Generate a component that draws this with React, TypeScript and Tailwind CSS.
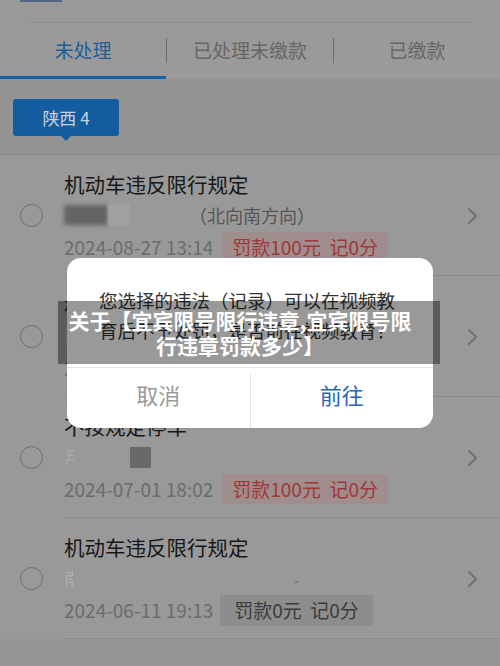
import React from "react";

const font = { fontFamily: '"Noto Sans CJK SC", "Noto Sans", sans-serif' };

function Radio() {
  return (
    <div className="w-[64px] flex items-center justify-center shrink-0">
      <div className="w-[23px] h-[23px] rounded-full border-[1.5px] border-[#6e6e6e] mr-[2px]" />
    </div>
  );
}

function Chevron() {
  return (
    <svg width="12" height="18" viewBox="0 0 12 18" className="absolute right-[21px] top-1/2 -translate-y-1/2">
      <path d="M2 2 L9 9 L2 16" fill="none" stroke="#6f6f6f" strokeWidth="2" strokeLinecap="round" strokeLinejoin="round" />
    </svg>
  );
}

function Item({
  title,
  line2,
  date,
  badge,
  red,
}: {
  title: string;
  line2: React.ReactNode;
  date: string;
  badge: string;
  red: boolean;
}) {
  return (
    <div className="flex items-stretch h-[121px] relative">
      <Radio />
      <div className="flex-1 border-b border-[#8c8c8c] pt-[16px]">
        <div className="h-[26px] leading-[26px] text-[20.5px] text-[#171717]">{title}</div>
        <div className="h-[30px] mt-[3px] flex items-center">{line2}</div>
        <div className="h-[30px] mt-[2px] flex items-center">
          <span className="text-[19px] text-[#6c6c6c]">{date}</span>
          <span
            className={
              red
                ? "ml-[9px] h-[30px] px-[10px] flex items-center text-[19px] bg-[#a08d8d] text-[#a03838] whitespace-pre"
                : "ml-[7px] h-[31px] px-[14px] flex items-center text-[19px] bg-[#8d8d8d] text-[#3b3b3b] whitespace-pre"
            }
          >
            {badge}
          </span>
        </div>
      </div>
      <Chevron />
    </div>
  );
}

export default function App() {
  return (
    <div className="relative w-[500px] h-[666px] overflow-hidden bg-[#969696]" style={font}>
      {/* top strip */}
      <div className="h-[23px] bg-[#999999] relative">
        <div className="ml-[20px] w-[42px] h-[2px] bg-[#4f6785]" />
        <div className="absolute left-[27px] right-[27px] bottom-0 h-px bg-[#8f8f8f]" />
      </div>
      {/* tabs */}
      <div className="h-[56px] bg-[#9a9a9a] flex relative">
        <div className="w-[166px] flex items-center justify-center text-[19px] text-[#1c5e9c] border-b-[3px] border-[#155fa5] pt-[1px]">
          未处理
        </div>
        <div className="w-px h-[25px] bg-[#6b6b6b] mt-[15px]" />
        <div className="w-[166px] flex items-center justify-center text-[19px] text-[#666] pb-[2px]">
          已处理未缴款
        </div>
        <div className="w-px h-[25px] bg-[#6b6b6b] mt-[15px]" />
        <div className="flex-1 flex items-center justify-center text-[19px] text-[#666] pb-[2px]">
          已缴款
        </div>
      </div>
      {/* header */}
      <div className="h-[76px] bg-[#939393] pt-[20px] pl-[13px] border-b border-[#8e8e8e]">
        <div className="relative w-[106px] h-[37px] rounded-[3px] bg-[#135c9f] flex items-center justify-center text-[17px] text-[#c9d3de]">
          陕西 4
          <div className="absolute left-[47px] -bottom-[5px] w-0 h-0 border-l-[6px] border-r-[6px] border-t-[6px] border-l-transparent border-r-transparent border-t-[#135c9f]" />
        </div>
      </div>
      {/* list */}
      <div className="bg-[#999999]">
        <Item
          title="机动车违反限行规定"
          red
          date="2024-08-27 13:14"
          badge="罚款100元  记0分"
          line2={
            <div className="flex items-center w-full">
              <div className="w-[44px] h-[20px] bg-[#646464] blur-[2px]" />
              <div className="w-[22px] h-[22px] bg-[#a1a1a1] blur-[1px]" />
              <span className="ml-[59px] text-[18px] text-[#555]">（北向南方向）</span>
            </div>
          }
        />
        <Item
          title="机动车违反限行规定"
          red
          date="2024-07-15 08:40"
          badge="罚款100元  记0分"
          line2={
            <div className="flex items-center w-full">
              <span className="w-[10px] overflow-hidden text-[17px] text-[#acacac]">南</span>
            </div>
          }
        />
        <Item
          title="不按规定停车"
          red
          date="2024-07-01 18:02"
          badge="罚款100元  记0分"
          line2={
            <div className="flex items-center w-full">
              <span className="w-[10px] overflow-hidden text-[17px] text-[#acacac]">月</span>
              <div className="ml-[56px] w-[21px] h-[21px] bg-[#696969]" />
            </div>
          }
        />
        <Item
          title="机动车违反限行规定"
          red={false}
          date="2024-06-11 19:13"
          badge="罚款0元  记0分"
          line2={
            <div className="flex items-center w-full">
              <span className="w-[9px] overflow-hidden text-[17px] text-[#b0b0b0]">南</span>
              <div className="ml-[222px] w-[3px] h-[2px] bg-[#7a7a7a] mt-[8px]" />
            </div>
          }
        />
      </div>

      {/* modal */}
      <div className="absolute left-[67px] top-[258px] w-[366px] h-[170px] bg-white rounded-[14px] flex flex-col overflow-hidden">
        <div className="h-[110px] flex flex-col items-center justify-center border-b border-[#e2e2e2] pt-[4px] pr-[6px]">
          <div className="text-[18.5px] leading-[30px] text-[#333]">您选择的违法（记录）可以在视频教</div>
          <div className="text-[18.5px] leading-[30px] text-[#333]">育后不予处罚，是否前往视频教育？</div>
        </div>
        <div className="flex-1 flex">
          <div className="flex-1 flex items-center justify-center text-[22px] text-[#9a9a9a] pb-[7px]">取消</div>
          <div className="w-px bg-[#e2e2e2] mt-[6px]" />
          <div className="flex-1 flex items-center justify-center text-[22px] text-[#2b67ad] pb-[7px]">前往</div>
        </div>
      </div>

      {/* caption */}
      <div className="absolute left-[58px] top-[301px] w-[382px] h-[63px] bg-black/40 flex flex-col items-center justify-center pl-[8px] pr-[26px] text-white font-bold text-[21px] leading-[25px]">
        <div className="whitespace-nowrap">关于【宜宾限号限行违章,宜宾限号限</div>
        <div className="whitespace-nowrap">行违章罚款多少】</div>
      </div>
    </div>
  );
}
